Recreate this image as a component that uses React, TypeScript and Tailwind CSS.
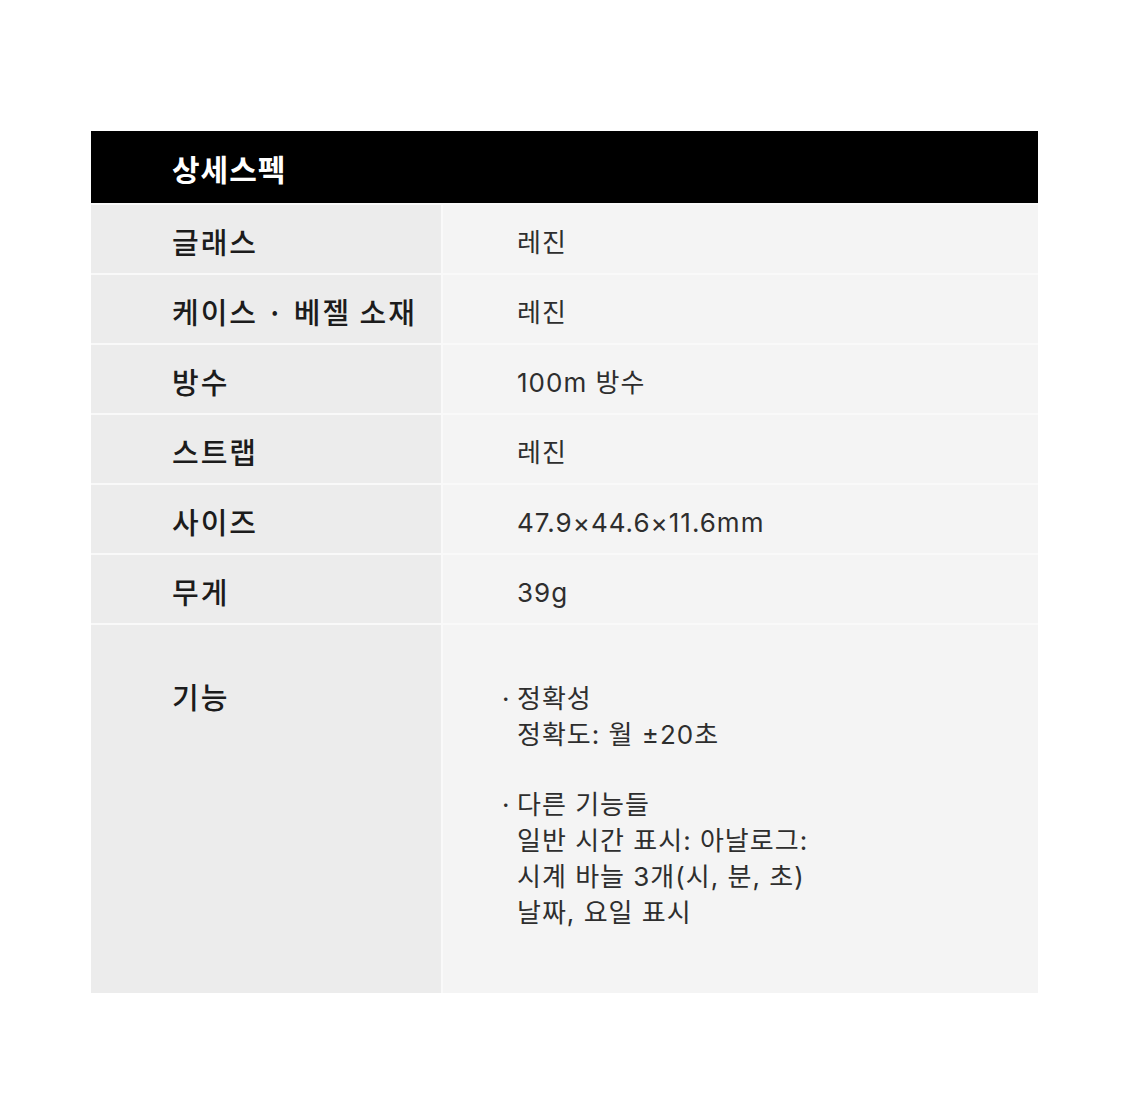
const SPECS = [
  { label: "글래스", value: "레진" },
  { label: "케이스 · 베젤 소재", value: "레진" },
  { label: "방수", value: "100m 방수" },
  { label: "스트랩", value: "레진" },
  { label: "사이즈", value: "47.9×44.6×11.6mm" },
  { label: "무게", value: "39g" },
];

const FEATURES = [
  { title: "정확성", lines: ["정확도: 월 ±20초"] },
  {
    title: "다른 기능들",
    lines: ["일반 시간 표시: 아날로그:", "시계 바늘 3개(시, 분, 초)", "날짜, 요일 표시"],
  },
];

const font = { fontFamily: '"Noto Sans CJK KR", "Noto Sans", sans-serif' };
const valueFont = { fontFamily: 'Inter, "Noto Sans CJK KR", sans-serif' };

export default function App() {
  return (
    <div className="min-h-screen bg-white pt-[131px] pl-[91px]" style={font}>
      <div className="w-[947px]">
        {/* Header */}
        <div className="h-[72px] bg-black flex items-center pl-[81px] pt-[2px]">
          <span className="text-[30px] font-bold text-white tracking-[1px]">상세스펙</span>
        </div>

        {/* Rows */}
        <div className="flex flex-col gap-[2px] bg-[#f9f9f9] pt-[2px]">
          {SPECS.map((s) => (
            <div key={s.label} className="flex gap-[2px] h-[68px]">
              <div className="w-[350px] bg-[#ececec] flex items-center pl-[81px] pt-[6px]">
                <span className="text-[29px] font-medium text-[#1c1c1c] tracking-[2px]">{s.label}</span>
              </div>
              <div className="flex-1 bg-[#f4f4f4] flex items-center pl-[74px] pt-[6px]" style={valueFont}>
                <span className="text-[26px] text-[#2e2e2e] tracking-[1px]">{s.value}</span>
              </div>
            </div>
          ))}

          <div className="flex gap-[2px] h-[368px]">
            <div className="w-[350px] bg-[#ececec] pl-[81px] pt-[53px]">
              <span className="text-[29px] font-medium text-[#1c1c1c] leading-[36px] tracking-[2px]">기능</span>
            </div>
            <div className="flex-1 bg-[#f4f4f4] pl-[74px] pt-[56px] flex flex-col gap-[34px]" style={valueFont}>
              {FEATURES.map((f) => (
                <div key={f.title} className="text-[26px] leading-[36px] text-[#2e2e2e] tracking-[1px]">
                  <div className="relative">
                    <span className="absolute -left-[15px] top-0">·</span>
                    {f.title}
                  </div>
                  {f.lines.map((l) => (
                    <div key={l}>{l}</div>
                  ))}
                </div>
              ))}
            </div>
          </div>
        </div>
      </div>
    </div>
  );
}
